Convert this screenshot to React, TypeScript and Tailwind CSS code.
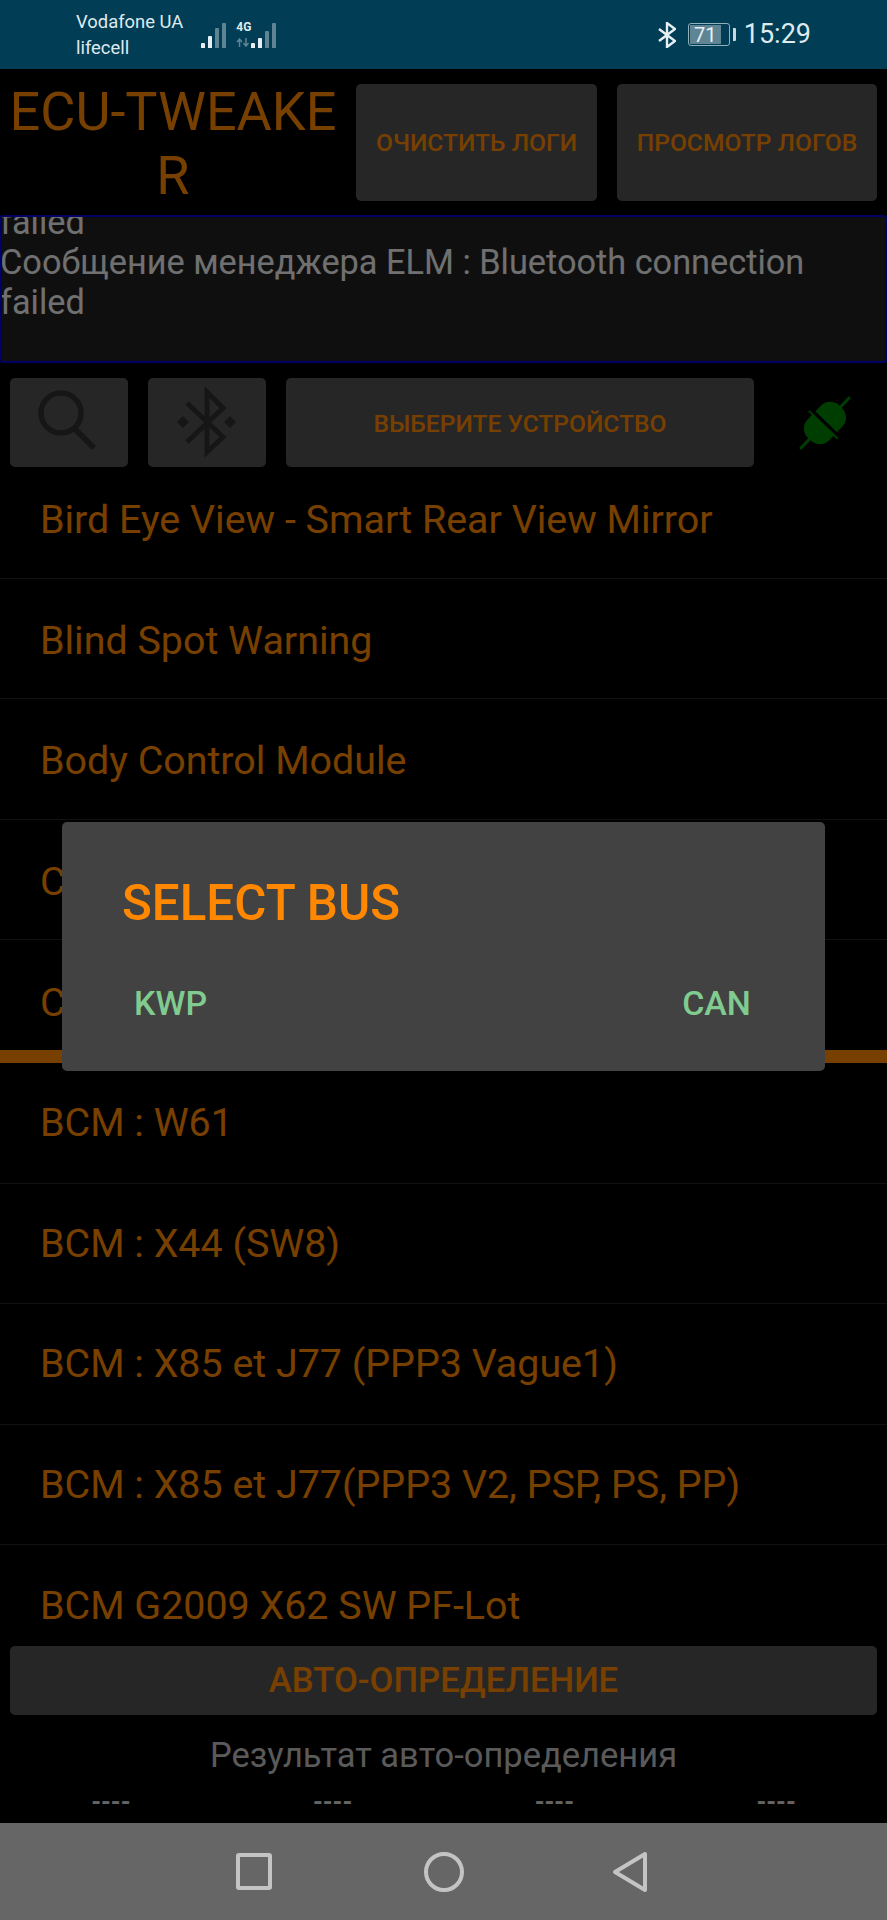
const topRows = [
  "Bird Eye View - Smart Rear View Mirror",
  "Blind Spot Warning",
  "Body Control Module",
  "Climate Control",
  "Combine Cluster",
];

const bottomRows = [
  "BCM : W61",
  "BCM : X44 (SW8)",
  "BCM : X85 et J77 (PPP3 Vague1)",
  "BCM : X85 et J77(PPP3 V2, PSP, PS, PP)",
  "BCM G2009 X62 SW PF-Lot",
];

function SignalBars({ heights }: { heights: number[] }) {
  return (
    <div className="flex h-[25px] items-end gap-[3px]">
      {heights.map((h, i) => (
        <div
          key={i}
          className={i < 2 ? "w-[4px] rounded-t-[1px] bg-[#e6f0f4]" : "w-[4px] rounded-t-[1px] bg-[#5f8494]"}
          style={{ height: h }}
        />
      ))}
    </div>
  );
}

function StatusBar() {
  return (
    <div className="flex h-[69px] shrink-0 items-center bg-[#013d54] pl-[76px] pr-[76px] text-[#dfeaef]">
      <div className="flex flex-col text-[18.4px] leading-[26px]">
        <span>Vodafone UA</span>
        <span>lifecell</span>
      </div>
      <div className="ml-[18px] mt-[2px] flex items-end gap-[10px]">
        <SignalBars heights={[5, 12, 20, 25]} />
        <div className="relative">
          <span className="absolute -top-[2px] left-0 text-[12px] font-bold leading-[12px]">4G</span>
          <svg width="14" height="9" viewBox="0 0 14 9" className="mb-[1px] mt-[15px]">
            <path d="M3.5 9V2M1 4l2.5-3L6 4M10 0v7M7.5 5l2.5 3 2.5-3" fill="none" stroke="#5f8494" strokeWidth="1.5" />
          </svg>
        </div>
        <div className="-ml-[9px]">
          <SignalBars heights={[5, 10, 17, 25]} />
        </div>
      </div>
      <div className="ml-auto flex items-center">
        <svg width="18" height="26" viewBox="0 0 18 26" fill="none" stroke="#e6f0f4" strokeWidth="2.4">
          <path d="M1 7l16 12-8 6V1l8 6L1 19" />
        </svg>
        <div className="ml-[12px] flex h-[23px] w-[42px] items-center rounded-[3px] border border-[#8fb0bd] p-[1px]">
          <div className="flex h-full w-[31px] items-center justify-center bg-[#5f8494] text-[20px] leading-none text-[#e6f0f4]">
            71
          </div>
        </div>
        <div className="ml-[3px] h-[13px] w-[3px] rounded-r-[1px] bg-[#c9d9df]" />
        <span className="ml-[8px] text-[27px] leading-none">15:29</span>
      </div>
    </div>
  );
}

function GreyButton({ className, children }: { className: string; children: React.ReactNode }) {
  return (
    <button className={"flex items-center justify-center rounded-[5px] bg-[#4d4d4d] font-medium text-[#ee8000] " + className}>
      {children}
    </button>
  );
}

function ListRows({ rows, nudge }: { rows: string[]; nudge?: boolean }) {
  return (
    <>
      {rows.map((r) => (
        <div
          key={r}
          className={
            "flex h-[120.6px] shrink-0 items-center border-b border-[#222222] pl-[40px] text-[39.4px] text-[#ee8000] " +
            (nudge ? "pt-[4px]" : "")
          }
        >
          {r}
        </div>
      ))}
    </>
  );
}

function NavBar() {
  return (
    <div className="relative flex h-[97px] shrink-0 items-center bg-[#666666]">
      <div className="ml-[236px] h-[37px] w-[36px] rounded-[3px] border-[4px] border-[#c4c4c4]" />
      <div className="ml-[152px] h-[40px] w-[40px] rounded-full border-[4px] border-[#c4c4c4]" />
      <svg width="36" height="42" viewBox="0 0 36 42" className="ml-[148px]" fill="none" stroke="#c4c4c4" strokeWidth="4" strokeLinejoin="round">
        <path d="M33 3v36L3 21z" />
      </svg>
    </div>
  );
}

export default function App() {
  return (
    <div className="flex h-[1920px] w-[887px] flex-col overflow-hidden bg-black font-['Roboto',sans-serif]">
      <StatusBar />

      <div className="relative flex min-h-0 flex-1 flex-col">
        {/* Header */}
        <div className="flex h-[146px] shrink-0 pr-[10px]">
          <div className="w-[346px] break-all pt-[11px] text-center text-[54px] leading-[64px] text-[#ee8000]">
            ECU-TWEAKER
          </div>
          <GreyButton className="ml-[10px] mt-[15px] h-[117px] w-[241px] pt-[2px] text-[24.6px]">ОЧИСТИТЬ ЛОГИ</GreyButton>
          <GreyButton className="ml-[20px] mt-[15px] h-[117px] w-[260px] pt-[2px] text-[24.6px]">ПРОСМОТР ЛОГОВ</GreyButton>
        </div>

        {/* Log output, scrolled to the end */}
        <div className="flex h-[148px] shrink-0 flex-col justify-end overflow-hidden rounded-[3px] border-2 border-[#0000cc] bg-[#1e1e1e] pb-[39px] text-[34.3px] leading-[40px] text-[#e0e0e0]">
          <p className="-ml-[2px]">failed</p>
          <p className="-ml-[2px]">Сообщение менеджера ELM : Bluetooth connection</p>
          <p className="-ml-[2px]">failed</p>
        </div>

        {/* Device row */}
        <div className="flex h-[104px] shrink-0 items-end pl-[10px]">
          <GreyButton className="h-[89px] w-[118px]">
            <svg width="118" height="89" viewBox="10 378 118 89" fill="none" stroke="#2c2c2c" strokeWidth="5.5">
              <circle cx="61" cy="413" r="20" />
              <path d="M74 428l20 20" strokeWidth="6" />
            </svg>
          </GreyButton>
          <GreyButton className="ml-[20px] h-[89px] w-[118px]">
            <svg width="118" height="89" viewBox="148 378 118 89" fill="none" stroke="#2c2c2c" strokeWidth="5">
              <path d="M187 403l36 34-16 15v-60l16 16-36 34" />
              <path d="M183 416l6 6-6 6-6-6zM230 416l6 6-6 6-6-6z" fill="#2c2c2c" stroke="none" />
            </svg>
          </GreyButton>
          <GreyButton className="ml-[20px] h-[89px] w-[468px] pt-[3px] text-[24.6px]">ВЫБЕРИТЕ УСТРОЙСТВО</GreyButton>
          <svg width="56" height="56" viewBox="-28 -28 56 56" className="mb-[16px] ml-[43px] overflow-visible">
            <g transform="rotate(-46)" fill="#007a00">
              <rect x="-36" y="-1.6" width="72" height="3.2" rx="1.6" />
              <path d="M-1.5 -15h-8a13 13 0 0 0-13 13v4a13 13 0 0 0 13 13h8z" />
              <path d="M1.5 -15h8a13 13 0 0 1 13 13v4a13 13 0 0 1-13 13h-8z" />
              <rect x="-1.5" y="-20" width="3" height="40" fill="#000000" />
              <rect x="-3.5" y="-20" width="2" height="40" />
            </g>
          </svg>
        </div>

        {/* Two lists with the orange divider between them */}
        <div className="h-[583px] shrink-0 overflow-hidden">
          <div className="-mt-[9px]">
            <ListRows rows={topRows} nudge />
          </div>
        </div>
        <div className="h-[13px] shrink-0 bg-[#ee8000]" />
        <div className="h-[583px] shrink-0 overflow-hidden">
          <ListRows rows={bottomRows} />
        </div>

        {/* Auto detect */}
        <div className="shrink-0 px-[10px]">
          <GreyButton className="h-[69px] w-full text-[34.7px]">АВТО-ОПРЕДЕЛЕНИЕ</GreyButton>
        </div>
        <div className="mt-[16px] shrink-0 text-center text-[34.5px] leading-[48px] text-[#b4b4b4]">
          Результат авто-определения
        </div>
        <div className="mt-[12px] grid shrink-0 grid-cols-4 text-center text-[25px] font-bold leading-[24px] text-[#c8c8c8]">
          <span>----</span>
          <span>----</span>
          <span>----</span>
          <span>----</span>
        </div>

        {/* Dialog scrim */}
        <div className="absolute inset-0 flex items-center justify-center bg-black/50">
          <div className="flex h-[249px] w-[763px] flex-col rounded-[5px] bg-[#424242]">
            <h2 className="pl-[60px] pt-[53px] text-[49.3px] font-medium leading-[56px] text-[#ff8800]">SELECT BUS</h2>
            <div className="mt-[48px] flex justify-between pl-[72px] pr-[74px] text-[34px] font-medium leading-[48px] text-[#80cb8f]">
              <span>KWP</span>
              <span>CAN</span>
            </div>
          </div>
        </div>
      </div>

      <NavBar />
    </div>
  );
}
